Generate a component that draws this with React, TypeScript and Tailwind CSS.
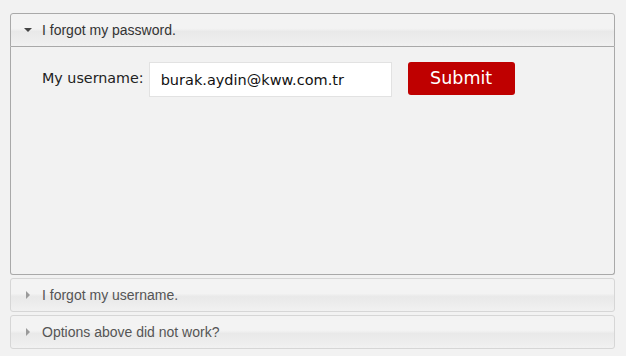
import { useState } from "react";

const sections = [
  { id: "password", title: "I forgot my password." },
  { id: "username", title: "I forgot my username." },
  { id: "other", title: "Options above did not work?" },
];

function Arrow({ open }: { open: boolean }) {
  return (
    <svg width="8" height="8" viewBox="0 0 8 8" className="mr-[10px] shrink-0">
      {open ? <polygon points="0,2 8,2 4,6" fill="#454545" /> : <polygon points="2,0 6,4 2,8" fill="#9a9a9a" />}
    </svg>
  );
}

export default function App() {
  const [active, setActive] = useState("password");
  const [email, setEmail] = useState("burak.aydin@kww.com.tr");

  return (
    <main className="min-h-screen w-[626px] h-[356px] bg-[#f2f2f2] pt-[13px] px-[10px] font-['Liberation_Sans',Arial,sans-serif]">
      <div className="w-[605px] flex flex-col gap-[3px]">
        {sections.map((s) => {
          const open = s.id === active;
          return (
            <div key={s.id}>
              <button
                onClick={() => setActive(s.id)}
                className={`w-full h-[34px] flex items-center pl-[13px] text-[14px] text-left border bg-[linear-gradient(to_bottom,#f3f3f3_0%,#f3f3f3_45%,#e9e9e9_55%,#ececec_75%,#f1f1f1_100%)] ${
                  open
                    ? "text-[#333] border-[#a9a9a9] rounded-t-[3px]"
                    : "text-[#555] border-[#d6d6d6] rounded-[3px]"
                }`}
              >
                <Arrow open={open} />
                {s.title}
              </button>
              {open && (
                <div className="h-[228px] bg-[#f2f2f2] border border-t-0 border-[#a9a9a9] rounded-b-[3px] pl-[31px] pt-[15px] font-['DejaVu_Sans',Verdana,sans-serif]">
                  {s.id === "password" && (
                    <div className="flex items-start">
                      <label className="text-[14.3px] text-[#222] h-[34px] flex items-center mr-[5px]">My username:</label>
                      <input
                        value={email}
                        onChange={(e) => setEmail(e.target.value)}
                        className="w-[243px] h-[35px] bg-white border border-[#e2e2e2] px-[11px] text-[14.5px] text-[#111] outline-none"
                      />
                      <button className="ml-[16px] w-[107px] h-[33px] bg-[#bf0000] rounded-[3px] text-white text-[17.5px]">
                        Submit
                      </button>
                    </div>
                  )}
                </div>
              )}
            </div>
          );
        })}
      </div>
    </main>
  );
}
